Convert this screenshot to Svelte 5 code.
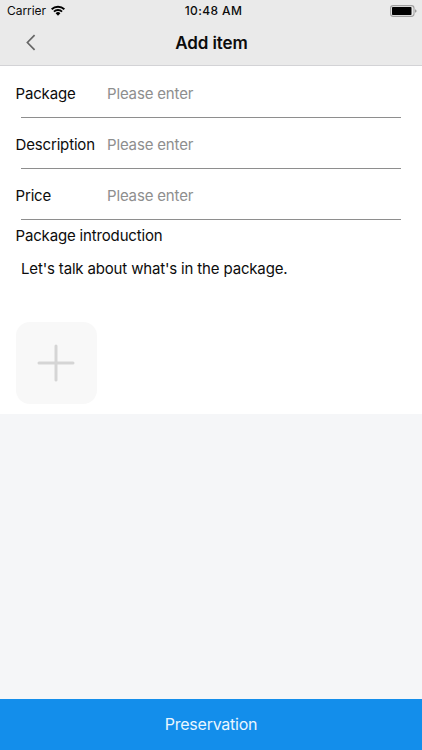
<script lang="ts">
  /** AddItem: form for adding a package, with status bar and save button. */

  const fields = $state([
    { id: 'package', label: 'Package', value: '' },
    { id: 'description', label: 'Description', value: '' },
    { id: 'price', label: 'Price', value: '' },
  ]);

  let intro = $state("Let's talk about what's in the package.");
</script>

<div class="screen">
  <header class="top">
    <div class="status">
      <div class="carrier">
        <span class="carrier-name">Carrier</span>
        <svg class="wifi" viewBox="0 0 14 11" aria-hidden="true">
          <path d="M0 3.6A10 10 0 0 1 14 3.6L12.7 5A8.2 8.2 0 0 0 1.3 5Z" />
          <path d="M2.3 6A6.7 6.7 0 0 1 11.7 6L10.4 7.3A4.9 4.9 0 0 0 3.6 7.3Z" />
          <path d="M4.6 8.3A3.4 3.4 0 0 1 9.4 8.3L7 10.7Z" />
        </svg>
      </div>
      <span class="time">10:48 AM</span>
      <svg class="battery" viewBox="0 0 27 12" aria-hidden="true">
        <rect x="0.6" y="0.6" width="23.4" height="10.8" rx="2.6" fill="none" stroke="#a0a0a0" stroke-width="1.1" />
        <rect x="2" y="2" width="19.5" height="8" rx="0.8" />
        <path d="M25 4.2Q26.6 4.7 26.6 6T25 7.8Z" fill="#999" />
      </svg>
    </div>
    <nav class="nav">
      <button class="back" aria-label="Back">
        <svg viewBox="0 0 10 17" aria-hidden="true">
          <path d="M8.6 1.1L1.4 8.5L8.6 15.9" />
        </svg>
      </button>
      <h1>Add item</h1>
    </nav>
  </header>

  <main class="form">
    {#each fields as field (field.id)}
      <div class="row">
        <label for={field.id}>{field.label}</label>
        <input id={field.id} placeholder="Please enter" bind:value={field.value} />
      </div>
    {/each}

    <label class="intro-label" for="intro">Package introduction</label>
    <textarea id="intro" bind:value={intro}></textarea>

    <button class="add" aria-label="Add picture">
      <svg viewBox="0 0 38 38" aria-hidden="true">
        <path d="M19 2V36M2 19H36" />
      </svg>
    </button>
  </main>

  <button class="save">Preservation</button>
</div>

<style>
  :global(body) {
    margin: 0;
  }

  .screen {
    display: flex;
    flex-direction: column;
    height: 100vh;
    background: #f5f6f8;
    color: #0c0c0c;
    font-family: Inter, 'Liberation Sans', sans-serif;
    font-size: 15px;
    letter-spacing: -0.16px;
  }

  button, input, textarea {
    border: none;
    padding: 0;
    margin: 0;
    background: none;
    color: inherit;
    font: inherit;
    letter-spacing: inherit;
    outline: none;
    border-radius: 0;
  }

  .top {
    box-sizing: border-box;
    height: 66px;
    background: #eaeaea;
    border-bottom: 1px solid #d3d3d6;
  }

  .status {
    display: grid;
    grid-template-columns: 1fr auto 1fr;
    align-items: center;
    height: 21px;
    padding: 0 5px 0 7px;
  }

  .carrier {
    display: flex;
    align-items: center;
    gap: 5px;
    font-size: 12px;
  }

  .carrier-name { letter-spacing: -0.05px; }

  .wifi {
    width: 14px;
    height: 11px;
  }

  .time {
    padding-left: 3px;
    font-size: 12px;
    font-weight: 500;
    letter-spacing: 0.4px;
  }

  .battery {
    justify-self: end;
    width: 27px;
    height: 12px;
  }

  .nav {
    display: grid;
    grid-template-columns: 61px 1fr 60px;
    align-items: center;
    height: 43px;
  }

  .back {
    display: flex;
    justify-content: center;
  }

  .back svg {
    width: 10px;
    height: 17px;
    fill: none;
    stroke: #666;
    stroke-width: 1.7;
  }

  h1 {
    margin: 0;
    text-align: center;
    font-size: 17px;
    font-weight: 600;
    letter-spacing: -0.1px;
  }

  .form {
    display: flex;
    flex-direction: column;
    height: 347.5px;
    background: #fff;
  }

  .row {
    box-sizing: border-box;
    display: grid;
    grid-template-columns: 91.5px 1fr;
    align-items: center;
    height: 51px;
    padding: 2px 21px 0 15.5px;
    background: linear-gradient(#8e8e8e, #8e8e8e) 21px 100% / calc(100% - 42px) 1px no-repeat;
  }

  .row:first-child {
    height: 52px;
    padding-top: 3px;
  }

  .row input::placeholder {
    color: #8e8e8e;
    opacity: 1;
  }

  .intro-label {
    padding-left: 15.5px;
    line-height: 32px;
  }

  textarea {
    height: 70px;
    padding: 8px 21px 0;
    line-height: 18px;
    box-sizing: border-box;
    resize: none;
  }

  .add {
    display: flex;
    align-items: center;
    justify-content: center;
    width: 81.5px;
    height: 81.5px;
    margin-left: 15.5px;
    border-radius: 14px;
    background: #f8f8f8;
  }

  .add svg {
    width: 38px;
    height: 38px;
    stroke: #d5d5d5;
    stroke-width: 3;
    stroke-linecap: round;
  }

  .save {
    height: 51px;
    margin-top: auto;
    padding-bottom: 1px;
    background: #138eeb;
    color: #e9f6ff;
    font-size: 16px;
    letter-spacing: -0.25px;
  }
</style>
